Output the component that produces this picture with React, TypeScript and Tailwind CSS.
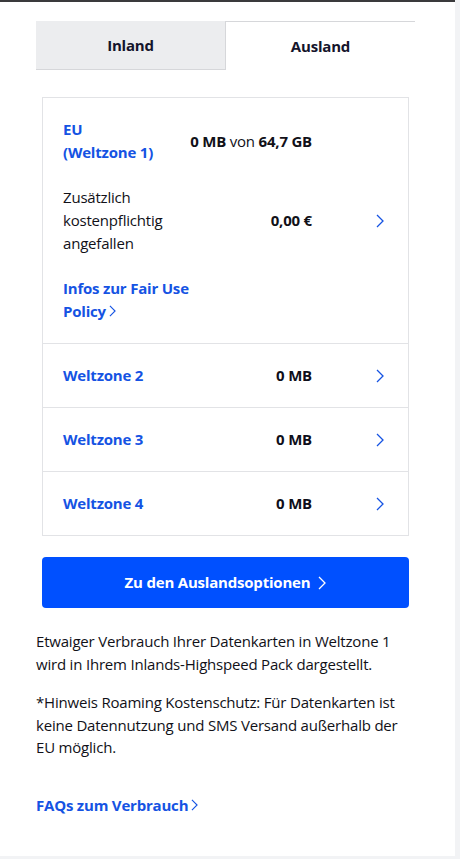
const font = { fontFamily: '"Open Sans", "Noto Sans", sans-serif' };

function Chevron({ className = '' }: { className?: string }) {
  return (
    <svg className={className} width="8" height="14" viewBox="0 0 8 14" fill="none" stroke="currentColor" strokeWidth={1.3}>
      <path d="M1 1l6 6-6 6" />
    </svg>
  );
}

function ZoneRow({ name, value }: { name: string; value: string }) {
  return (
    <div className="grid grid-cols-[113px_1fr_72px] items-center h-16 pl-5 pr-6 border-t border-[#e2e3e6]">
      <span className="font-bold text-[#1553e3]">{name}</span>
      <span className="text-right font-bold text-[#0f0f1a]">{value}</span>
      <div className="flex justify-end text-[#1553e3]">
        <Chevron />
      </div>
    </div>
  );
}

export default function App() {
  return (
    <div className="flex h-[859px] bg-[#f2f3f5] text-[15px] leading-[23px] text-[#111118] tracking-[-0.2px]" style={font}>
      <div className="w-[455px] h-[856px] bg-white">
        <div className="h-[2px] bg-[#3a3a3c]" />

        <div className="ml-9 mr-10 mt-[19px] flex">
          <div className="flex-1 h-[49px] flex items-center justify-center bg-[#ecedef] border-b border-[#d6d7da] font-bold text-[#14142b]">
            Inland
          </div>
          <div className="flex-1 h-[49px] flex items-center justify-center border-t border-l border-[#d6d7da] font-bold text-[#14142b]">
            Ausland
          </div>
        </div>

        <div className="ml-[42px] mr-[46px] mt-[27px] border border-[#e2e3e6]">
          <div className="pl-5 pr-6 pt-5 pb-5 flex flex-col gap-[22px]">
            <div className="grid grid-cols-[113px_1fr_72px] items-center">
              <span className="font-bold text-[#1553e3]">
                EU <span className="whitespace-nowrap">(Weltzone 1)</span>
              </span>
              <span className="text-right">
                <b className="font-bold">0 MB</b> von <b className="font-bold">64,7 GB</b>
              </span>
              <span />
            </div>
            <div className="grid grid-cols-[113px_1fr_72px] items-center">
              <span>Zusätzlich kostenpflichtig angefallen</span>
              <span className="text-right font-bold">0,00 €</span>
              <div className="flex justify-end text-[#1553e3]">
                <Chevron />
              </div>
            </div>
            <a className="w-[132px] font-bold text-[#1553e3]">
              Infos zur Fair Use Policy
              <Chevron className="inline-block ml-[3px] -mt-[3px] w-[7px] h-[12px]" />
            </a>
          </div>
          <ZoneRow name="Weltzone 2" value="0 MB" />
          <ZoneRow name="Weltzone 3" value="0 MB" />
          <ZoneRow name="Weltzone 4" value="0 MB" />
        </div>

        <button className="ml-[42px] mt-[21px] w-[367px] h-[51px] rounded bg-[#0050ff] text-white font-bold flex items-center justify-center gap-2">
          Zu den Auslandsoptionen
          <Chevron />
        </button>

        <div className="ml-9 mr-[50px] mt-[22px] leading-[22.5px] flex flex-col gap-4">
          <p>Etwaiger Verbrauch Ihrer Datenkarten in Weltzone 1 wird in Ihrem Inlands-Highspeed Pack dargestellt.</p>
          <p>*Hinweis Roaming Kostenschutz: Für Datenkarten ist keine Datennutzung und SMS Versand außerhalb der EU möglich.</p>
        </div>

        <a className="block mx-9 mt-[35px] font-bold text-[#1553e3]">
          FAQs zum Verbrauch
          <Chevron className="inline-block ml-[3px] -mt-[3px] w-[7px] h-[12px]" />
        </a>
      </div>
    </div>
  );
}
